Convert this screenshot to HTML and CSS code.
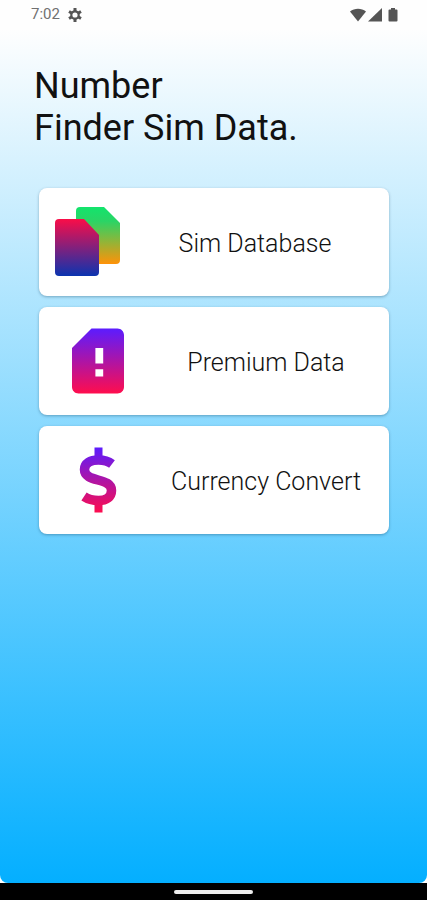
FILE: index.html
```html
<!DOCTYPE html>
<html lang="en">
<head>
<meta charset="utf-8">
<meta name="viewport" content="width=device-width, initial-scale=1">
<title>Number Finder Sim Data</title>
<link rel="stylesheet" href="styles.css">
</head>
<body>
<header class="status">
  <span class="time">7:02</span>
  <svg class="gear" viewBox="0 0 14 14" aria-hidden="true">
    <g stroke="#555" stroke-width="3"><path d="M7 0v14M1 3.5l12 7M13 3.5l-12 7"/></g>
    <circle cx="7" cy="7" r="3.7" fill="#fefefe" stroke="#555" stroke-width="2.2"/>
  </svg>
  <div class="signals">
    <svg width="16" height="14" viewBox="0 0 16 14" aria-hidden="true"><path d="M0 3.5C4.500-.2 11.500-.2 16 3.500L8 13.500Z" fill="#555"/></svg>
    <svg width="14" height="14" viewBox="0 0 14 14" aria-hidden="true"><path d="M14 0v13.500H0Z" fill="#555"/></svg>
    <svg class="battery" width="10" height="14" viewBox="0 0 10 14" aria-hidden="true"><path d="M3 0h4v1.500h1.500q1 0 1 1v10q0 1-1 1h-7q-1 0-1-1v-10q0-1 1-1H3Z" fill="#555"/></svg>
  </div>
</header>
<main class="screen">
  <h1 class="title">Number<br>Finder Sim Data.</h1>
  <nav class="menu">
    <a class="card card-wide-icon" href="#sim">
      <span class="icon">
        <svg width="66" height="70" viewBox="0 0 66 70" aria-hidden="true">
          <defs>
            <linearGradient id="green" x1="0" y1="0" x2="0" y2="1"><stop offset="0" stop-color="#12e46c"/><stop offset=".25" stop-color="#2bd465"/><stop offset="1" stop-color="#ff9208"/></linearGradient>
            <linearGradient id="red" x1="0" y1="0" x2="0" y2="1"><stop offset="0" stop-color="#fa0d48"/><stop offset="1" stop-color="#0b34b0"/></linearGradient>
          </defs>
          <path d="M25 0H49L65 16V53Q65 57 61 57H25Q21 57 21 53V4Q21 0 25 0Z" fill="url(#green)"/>
          <path d="M4 12H29L44 28V65Q44 69 40 69H4Q0 69 0 65V16Q0 12 4 12Z" fill="url(#red)"/>
        </svg>
      </span>
      <span class="label">Sim Database</span>
    </a>
    <a class="card" href="#premium">
      <span class="icon">
        <svg width="78" height="78" viewBox="0 0 24 24" aria-hidden="true">
          <defs><linearGradient id="violet" x1="0" y1="0" x2="0" y2="1"><stop offset="0" stop-color="#5b1cff"/><stop offset="1" stop-color="#ff0d4d"/></linearGradient></defs>
          <path d="M18 2h-8L4 8v12c0 1.100.9 2 2 2h12c1.100 0 2-.9 2-2V4c0-1.100-.9-2-2-2zm-4.400 14.800h-2.400v-2.300h2.400v2.300zm0-4h-2.400V8h2.400v4.800z" fill="url(#violet)"/>
        </svg>
      </span>
      <span class="label">Premium Data</span>
    </a>
    <a class="card" href="#currency">
      <span class="icon">
        <svg width="40" height="66" viewBox="0 0 40 66" aria-hidden="true">
          <defs><linearGradient id="dollar" gradientUnits="userSpaceOnUse" x1="0" y1="0" x2="0" y2="66"><stop offset="0" stop-color="#5b1cff"/><stop offset="1" stop-color="#ff0d4d"/></linearGradient></defs>
          <g fill="none" stroke="url(#dollar)" stroke-width="9.500">
            <path d="M34 17C30 14 25 13 20.500 13C12 13 6.500 16.500 6.500 22.500C6.500 36 33.500 30 33.500 43.500C33.500 50 28.500 53.500 20.500 53.500C15 53.500 10.500 52.500 6 49.500" stroke-linejoin="round"/>
            <path d="M20.500 .5V12M20.500 54V65.500" stroke-width="8"/>
          </g>
        </svg>
      </span>
      <span class="label">Currency Convert</span>
    </a>
  </nav>
</main>
<footer class="navbar"><span class="handle"></span></footer>
</body>
</html>
```
FILE: styles.css
```css
* {
  box-sizing: border-box;
}

body {
  margin: 0;
  min-height: 100vh;
  display: flex;
  flex-direction: column;
  background: #fefefe;
  color: #111;
  font-family: Roboto, "Liberation Sans", sans-serif;
}

.status {
  display: flex;
  align-items: center;
  height: 29px;
  padding: 0 29px 0 31px;
  gap: 8px;
}

.time {
  font-size: 15px;
  line-height: 29px;
  color: #707070;
}

.gear {
  width: 14px;
  height: 14px;
}

.signals {
  display: flex;
  align-items: center;
  gap: 2px;
  margin-left: auto;
}

.battery {
  margin-left: 4px;
}

.screen {
  flex: 1;
  padding: 36px 38px 40px 39px;
  background: linear-gradient(#fefefe, #04afff);
  border-radius: 0 0 8px 8px;
}

.title {
  margin: 0 0 39px -5px;
  font-size: 36px;
  line-height: 42px;
  font-weight: 400;
}

.menu {
  display: flex;
  flex-direction: column;
  gap: 11px;
}

.card {
  display: flex;
  align-items: center;
  min-height: 108px;
  padding-left: 14px;
  border-radius: 8px;
  background: #fff;
  box-shadow: 0 1px 3px rgba(0, 50, 80, 0.35);
  color: inherit;
  text-decoration: none;
}

.card-wide-icon {
  padding: 0 12px 0 4px;
}

.icon {
  flex: none;
  display: flex;
  justify-content: center;
  width: 90px;
}

.label {
  flex: 1;
  padding-top: 4px;
  text-align: center;
  font-size: 25px;
  line-height: 32px;
  font-weight: 300;
}

.navbar {
  display: flex;
  align-items: center;
  justify-content: center;
  height: 17px;
  background: #000;
}

.handle {
  width: 79px;
  height: 4px;
  border-radius: 2px;
  background: #eee;
}
```
